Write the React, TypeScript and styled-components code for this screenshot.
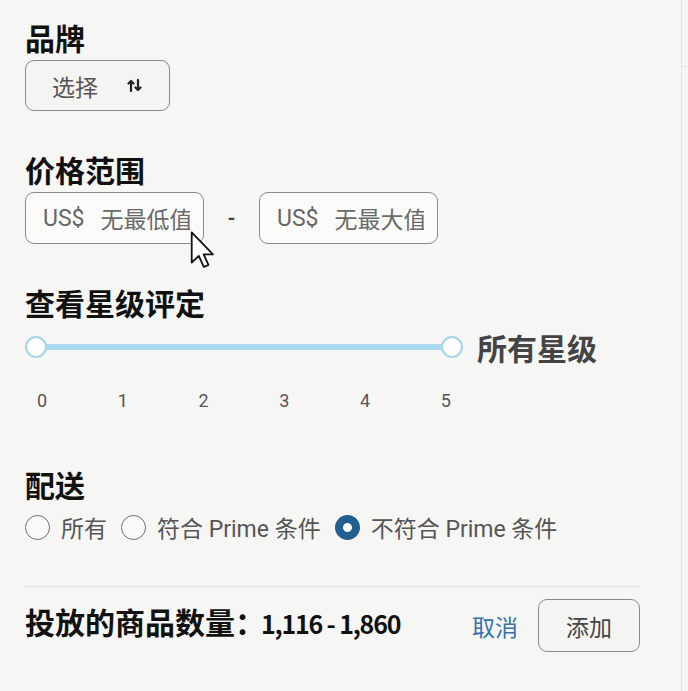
import React from "react";
import styled, { createGlobalStyle } from "styled-components";

const Global = createGlobalStyle`
  html, body { margin: 0; padding: 0; background: #f6f6f4; }
  body { font-family: Roboto, "Noto Sans CJK SC", sans-serif; }
  * { box-sizing: border-box; }
`;

const Page = styled.div`
  display: flex;
  width: 688px;
  height: 691px;
  background: #f6f6f4;
  overflow: hidden;
`;

const Panel = styled.div`
  position: relative;
  width: 681px;
  padding: 19px 41px 0 25px;
  display: flex;
  flex-direction: column;
`;

const Side = styled.div`
  flex: 1;
  border-left: 1px solid #e3e3e1;
`;

const SideTop = styled.div`
  height: 67px;
  border-bottom: 1px solid #e3e3e1;
`;

const Section = styled.div<{ $top?: number }>`
  margin-top: ${(p) => p.$top ?? 0}px;
  display: flex;
  flex-direction: column;
  align-items: flex-start;
`;

const Heading = styled.div`
  font-family: "Noto Sans CJK SC", sans-serif;
  font-weight: 700;
  font-size: 30px;
  line-height: 36px;
  height: 36px;
  color: #111;
  margin-bottom: 5px;
`;

const SelectButton = styled.button`
  width: 145px;
  height: 51px;
  border: 1.5px solid #8a8a8a;
  border-radius: 9px;
  background: #f4f4f2;
  display: flex;
  align-items: center;
  padding: 0 0 0 26px;
  gap: 29px;
  font-family: "Noto Sans CJK SC", sans-serif;
  font-size: 23px;
  color: #555;
  cursor: pointer;
`;

const PriceRow = styled.div`
  display: flex;
  align-items: center;
  width: 413px;
`;

const PriceBox = styled.label`
  width: 179px;
  height: 52px;
  border: 1.5px solid #8a8a8a;
  border-radius: 9px;
  background: #fbfbfa;
  display: flex;
  align-items: center;
  padding: 0 13px 0 17px;
  gap: 16px;
  overflow: hidden;
`;

const Currency = styled.span`
  font-family: Roboto, sans-serif;
  font-size: 23px;
  color: #666;
  flex: none;
`;

const PriceInput = styled.input`
  flex: 1;
  min-width: 0;
  border: none;
  outline: none;
  background: transparent;
  padding: 0;
  font-family: "Noto Sans CJK SC", sans-serif;
  font-size: 23px;
  color: #555;
  &::placeholder { color: #6a6a6a; }
`;

const Dash = styled.span`
  width: 55px;
  text-align: center;
  font-family: Roboto, sans-serif;
  font-size: 20px;
  font-weight: 700;
  color: #444;
`;

const SliderRow = styled.div`
  margin-top: 7px;
  display: flex;
  align-items: center;
  height: 30px;
  gap: 14px;
`;

const Slider = styled.div`
  position: relative;
  width: 438px;
  height: 22px;
  display: flex;
  align-items: center;
  justify-content: space-between;
`;

const Track = styled.div`
  position: absolute;
  left: 11px;
  right: 11px;
  top: 8px;
  height: 6px;
  border-radius: 3px;
  background: #a9d9ef;
`;

const Knob = styled.div`
  position: relative;
  width: 22px;
  height: 22px;
  border-radius: 50%;
  background: #fff;
  border: 2.5px solid #a4d6ea;
`;

const SliderLabel = styled.div`
  font-family: "Noto Sans CJK SC", sans-serif;
  font-weight: 700;
  font-size: 30px;
  line-height: 36px;
  color: #444;
`;

const Ticks = styled.div`
  margin: 28px 0 0 12px;
  width: 414px;
  height: 22px;
  display: flex;
  justify-content: space-between;
  font-family: Roboto, sans-serif;
  font-size: 18px;
  line-height: 22px;
  color: #555;
`;

const RadioRow = styled.div`
  margin-top: 5px;
  display: flex;
  align-items: center;
  height: 30px;
  gap: 14px;
`;

const RadioItem = styled.label`
  display: flex;
  align-items: center;
  gap: 11px;
  font-family: Roboto, "Noto Sans CJK SC", sans-serif;
  font-size: 23px;
  color: #555;
  cursor: pointer;
`;

const RadioCircle = styled.span<{ $checked?: boolean }>`
  width: 25px;
  height: 25px;
  border-radius: 50%;
  flex: none;
  background: ${(p) => (p.$checked ? "#fff" : "#fafafa")};
  border: ${(p) => (p.$checked ? "8px solid #215f8e" : "1.6px solid #6f6f6f")};
`;

const Divider = styled.div`
  margin-top: 44px;
  width: 615px;
  height: 1px;
  background: #e2e2e0;
`;

const Footer = styled.div`
  margin-top: 12px;
  display: flex;
  align-items: center;
  height: 53px;
  width: 615px;
`;

const Count = styled.div`
  flex: 1;
  font-family: "Noto Sans CJK SC", sans-serif;
  font-weight: 700;
  font-size: 30px;
  line-height: 36px;
  color: #111;
  margin-bottom: 8px;
  white-space: nowrap;
`;

const CountNumber = styled.span`
  font-size: 25px;
  letter-spacing: -1.2px;
  margin-left: -4px;
`;

const CancelLink = styled.a`
  font-family: "Noto Sans CJK SC", sans-serif;
  font-size: 23px;
  color: #3672ad;
  margin-right: 20px;
  text-decoration: none;
  cursor: pointer;
`;

const AddButton = styled.button`
  width: 102px;
  height: 53px;
  border: 1.5px solid #8a8a8a;
  border-radius: 9px;
  background: #f4f4f2;
  font-family: "Noto Sans CJK SC", sans-serif;
  font-size: 23px;
  color: #444;
  cursor: pointer;
`;

const Cursor = styled.svg`
  position: absolute;
  left: 190px;
  top: 231px;
`;

const SortIcon = () => (
  <svg width="15" height="13" viewBox="0 0 15 13" fill="none" stroke="#222" strokeWidth="2.2" strokeLinecap="round" strokeLinejoin="round">
    <path d="M4 12V2M1.5 4.5L4 2l2.5 2.5" />
    <path d="M11 1v10M8.5 8.5L11 11l2.5-2.5" />
  </svg>
);

export default function App() {
  const [ship, setShip] = React.useState(2);
  const options = ["所有", "符合 Prime 条件", "不符合 Prime 条件"];
  return (
    <Page>
      <Global />
      <Panel>
        <Section>
          <Heading>品牌</Heading>
          <SelectButton>
            <span>选择</span>
            <SortIcon />
          </SelectButton>
        </Section>

        <Section $top={40}>
          <Heading>价格范围</Heading>
          <PriceRow>
            <PriceBox>
              <Currency>US$</Currency>
              <PriceInput placeholder="无最低值" />
            </PriceBox>
            <Dash>-</Dash>
            <PriceBox>
              <Currency>US$</Currency>
              <PriceInput placeholder="无最大值" />
            </PriceBox>
          </PriceRow>
        </Section>

        <Section $top={40}>
          <Heading>查看星级评定</Heading>
          <SliderRow>
            <Slider>
              <Track />
              <Knob />
              <Knob />
            </Slider>
            <SliderLabel>所有星级</SliderLabel>
          </SliderRow>
          <Ticks>
            {[0, 1, 2, 3, 4, 5].map((n) => (
              <span key={n}>{n}</span>
            ))}
          </Ticks>
        </Section>

        <Section $top={54}>
          <Heading>配送</Heading>
          <RadioRow>
            {options.map((o, i) => (
              <RadioItem key={o} onClick={() => setShip(i)}>
                <RadioCircle $checked={ship === i} />
                <span>{o}</span>
              </RadioItem>
            ))}
          </RadioRow>
        </Section>

        <Divider />

        <Footer>
          <Count>
            投放的商品数量：<CountNumber>1,116 - 1,860</CountNumber>
          </Count>
          <CancelLink>取消</CancelLink>
          <AddButton>添加</AddButton>
        </Footer>

        <Cursor width="24" height="37" viewBox="0 0 17 27">
          <path d="M1 1V23L6.2 18.2L9.8 26.2L13.2 24.8L9.7 17H16.5Z" fill="#fff" stroke="#111" strokeWidth="1.3" strokeLinejoin="round" />
        </Cursor>
      </Panel>
      <Side>
        <SideTop />
      </Side>
    </Page>
  );
}
